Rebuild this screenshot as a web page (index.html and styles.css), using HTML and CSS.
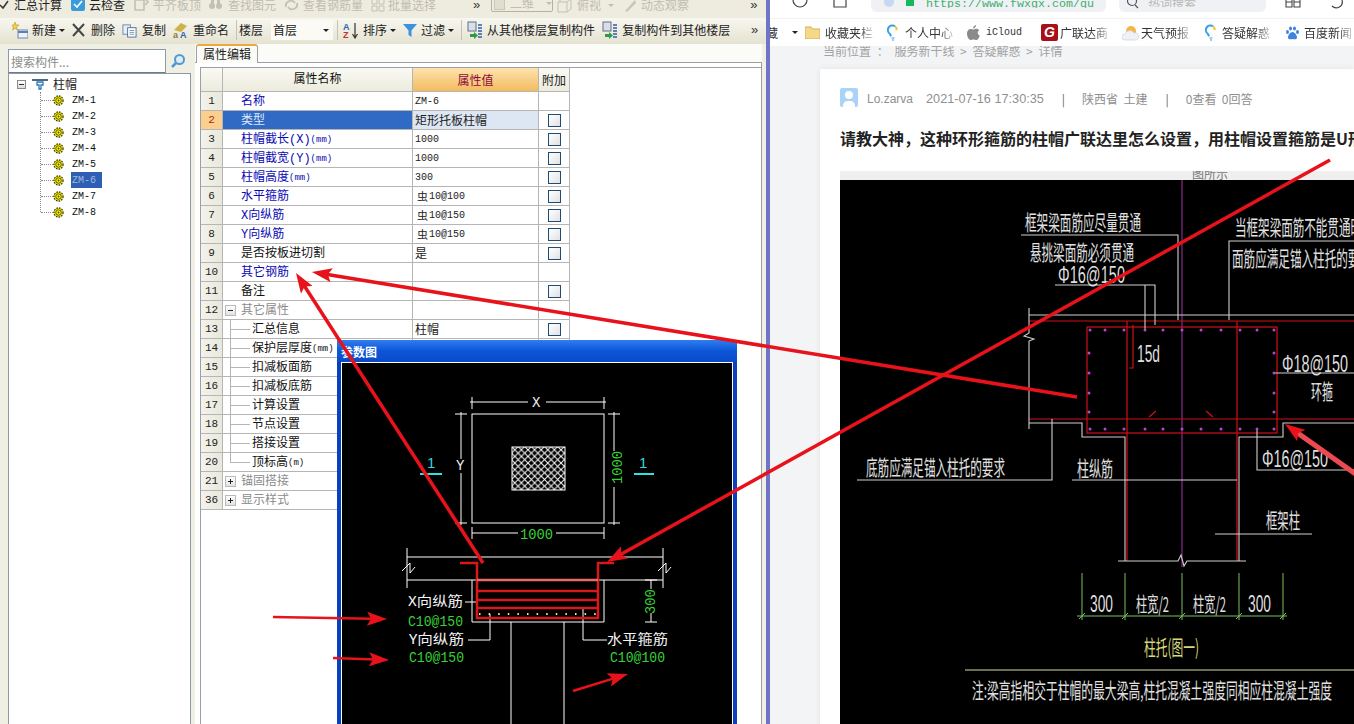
FILE: index.html
```html
<!DOCTYPE html>
<html lang="zh">
<head>
<meta charset="utf-8">
<title>属性编辑</title>
<link rel="stylesheet" href="styles.css">
</head>
<body>
<svg class="defs" width="0" height="0">
  <defs>
    <symbol id="gear" viewBox="0 0 11 11">
      <circle cx="5.5" cy="5.5" r="4.6" fill="#e8e000" stroke="#3a3a10" stroke-width="1.2" stroke-dasharray="1.6 1.1"/>
      <circle cx="5.5" cy="5.5" r="2.7" fill="#f4ee20" stroke="#55520c" stroke-width=".9"/>
      <circle cx="5.5" cy="5.5" r=".9" fill="#55520c"/>
    </symbol>
    <symbol id="copydoc" viewBox="0 0 16 16">
      <rect x="1" y="2" width="8" height="10" fill="#e9eef6" stroke="#6e86a8"/>
      <rect x="6" y="5" width="9" height="10" fill="#fff" stroke="#4f6f9c"/>
      <path d="M8 8h5M8 10h5M8 12h5" stroke="#7b95b8"/>
    </symbol>
    <symbol id="floorcopy" viewBox="0 0 16 18">
      <rect x="1" y="1" width="8" height="9" fill="#d9dee8" stroke="#5e6f88"/>
      <path d="M3 13h4v-2l4 3.5-4 3.5v-2H3z" fill="#2f9a45"/>
      <path d="M11 4h4M11 7h4M11 10h4M11 13h4M11 16h4" stroke="#2f5fa8" stroke-width="1.5"/>
    </symbol>
    <symbol id="bulb" viewBox="0 0 11 17">
      <path d="M8 2.2A4.4 4.4 0 0 0 3 10l1 2.4" fill="none" stroke="#36a3e8" stroke-width="2"/>
      <path d="M8 2.2a4.4 4.4 0 0 1 1.6 4" fill="none" stroke="#f2c230" stroke-width="2"/>
      <path d="M4.5 14h3M5 16h2" stroke="#36a3e8" stroke-width="1.2"/>
    </symbol>
    <marker id="head-big" viewBox="0 0 20 14" refX="6" refY="7" markerWidth="20" markerHeight="14" markerUnits="userSpaceOnUse" orient="auto">
      <path d="M0 0 20 7 0 14 4 7z" fill="#e8121a"/>
    </marker>
    <pattern id="hatch" width="6.6" height="6.6" patternUnits="userSpaceOnUse">
      <path d="M0 0 6.6 6.6M6.6 0 0 6.6" stroke="#fff" stroke-width="1"/>
    </pattern>
  </defs>
</svg>

<div class="screen">
  <section class="app">
    <div class="tb-top">
      <svg class="ic-clip" width="9" height="12" viewBox="0 0 9 12"><path d="M0 6l3 3 5-7" fill="none" stroke="#333" stroke-width="1.5"/></svg>
      <span class="tb-text t-first">汇总计算</span>
      <svg class="t-icon" width="16" height="14" viewBox="0 0 16 14"><rect x="1" y="0" width="14" height="13" rx="2" fill="#3a9bdc"/><path d="M4 6l3 3 5-6" fill="none" stroke="#fff" stroke-width="1.6"/></svg>
      <span class="tb-text t-cloud">云检查</span>
      <svg class="t-dis m9" width="15" height="14" viewBox="0 0 15 14"><path d="M1 2h9v10H1zM11 1l3 3-3 3" fill="none" stroke="#c3c1b3" stroke-width="1.6"/></svg>
      <span class="tb-text dis g4">平齐板顶</span>
      <svg class="t-dis m7" width="15" height="14" viewBox="0 0 15 14"><circle cx="4" cy="8" r="3" fill="#c3c1b3"/><circle cx="11" cy="8" r="3" fill="#c3c1b3"/><path d="M3 1h3v5H3zM9 1h3v5H9z" fill="#c3c1b3"/></svg>
      <span class="tb-text dis g5">查找图元</span>
      <svg class="t-dis m8" width="15" height="14" viewBox="0 0 15 14"><path d="M2 9a5 5 0 0 1 9-4M13 5a5 5 0 0 1-9 4" fill="none" stroke="#c3c1b3" stroke-width="1.8"/></svg>
      <span class="tb-text dis g4">查看钢筋量</span>
      <svg class="t-dis m8" width="14" height="14" viewBox="0 0 14 14"><path d="M1 1h5v5H1zM8 1h5v5H8zM1 8h5v5H1zM8 8h5v5H8z" fill="none" stroke="#c3c1b3"/></svg>
      <span class="tb-text dis g3">批量选择</span>
      <span class="more m37">»</span>
      <span class="combo"><span class="combo-box"></span><span class="combo-t">二维</span><span class="caret caret-dis"></span></span>
      <svg class="t-dis m4" width="15" height="15" viewBox="0 0 15 15"><path d="M1 4h9v10H1zM1 4l4-3h9l-4 3M10 14l4-3V1" fill="none" stroke="#c3c1b3"/></svg>
      <span class="tb-text dis g5">俯视</span>
      <span class="caret caret-dis m7"></span>
      <svg class="t-dis m8" width="15" height="15" viewBox="0 0 15 15"><path d="M3 13 13 2l1 3-9 9z" fill="#c8c6b8"/></svg>
      <span class="tb-text dis g4">动态观察</span>
      <span class="more more-end">»</span>
    </div>

    <div class="tb-main">
      <button class="tb-item first">
        <svg width="16" height="17" viewBox="0 0 16 17"><path d="M3 0l1 3h3L4.500 5l1 3L3 6.200.5 8l1-3L-1 3h3z" fill="#f4cf3e" stroke="#a88a16" stroke-width=".5"/><rect x="6" y="8" width="10" height="8" fill="#eef3fa" stroke="#6a86b0"/><path d="M6 10h10" stroke="#5d7fb3" stroke-width="2"/></svg>
        <span>新建</span><i class="caret"></i>
      </button>
      <button class="tb-item tight6">
        <svg width="13" height="14" viewBox="0 0 13 14"><path d="M1 1l11 12M12 1 1 13" stroke="#454545" stroke-width="2"/></svg>
        <span>删除</span>
      </button>
      <button class="tb-item">
        <svg width="15" height="15"><use href="#copydoc"/></svg>
        <span>复制</span>
      </button>
      <button class="tb-item">
        <svg width="15" height="17" viewBox="0 0 15 17"><path d="M1 8 8 1l6 3-6 6z" fill="#cdb24a"/><text class="ic-text" x="0" y="16">a</text><text class="ic-text blue" x="7" y="16">A</text></svg>
        <span>重命名</span>
      </button>
      <span class="sep"></span>
      <span class="tb-label">楼层</span>
      <span class="floor-select"><span>首层</span><i class="caret"></i></span>
      <span class="sep sep-a"></span>
      <button class="tb-item m5">
        <svg width="15" height="17" viewBox="0 0 15 17"><text class="ic-text blue" x="0" y="8">A</text><text class="ic-text red" x="0" y="16">Z</text><path d="M12 1v14M9.500 12l2.500 4 2.500-4" fill="none" stroke="#333" stroke-width="1.200"/></svg>
        <span>排序</span><i class="caret"></i>
      </button>
      <button class="tb-item g4">
        <svg width="14" height="15" viewBox="0 0 14 15"><path d="M0 1h14L8.500 7.500V14l-3-2V7.500z" fill="#3c92dc"/></svg>
        <span>过滤</span><i class="caret"></i>
      </button>
      <span class="sep"></span>
      <button class="tb-item m5 g4">
        <svg width="16" height="18"><use href="#floorcopy"/></svg>
        <span>从其他楼层复制构件</span>
      </button>
      <button class="tb-item m7 g4">
        <svg width="16" height="18"><use href="#floorcopy"/></svg>
        <span>复制构件到其他楼层</span>
      </button>
      <span class="more more-main">»</span>
    </div>

    <div class="work">
      <aside class="side">
        <div class="search">
          <input class="search-input" value="搜索构件..." readonly>
          <svg class="search-ic" width="16" height="16" viewBox="0 0 16 16"><circle cx="9.500" cy="6.500" r="4.500" fill="#dcecf8" stroke="#4f9bd4" stroke-width="2"/><path d="M6 10l-4 4" stroke="#4f9bd4" stroke-width="2.500"/></svg>
        </div>
        <div class="tree">
          <div class="tree-root">
            <span class="exp"><i></i></span>
            <svg width="16" height="12" viewBox="0 0 16 12"><path d="M0 1h16v2H0z" fill="#4b6a84"/><path d="M5 4h6v3H9v4H7V7H5z" fill="none" stroke="#2a78b8" stroke-width="1.300"/></svg>
            <span class="root-label">柱帽</span>
          </div>
          <ul class="tree-list">
            <li><svg width="11" height="11"><use href="#gear"/></svg><span>ZM-1</span></li>
            <li><svg width="11" height="11"><use href="#gear"/></svg><span>ZM-2</span></li>
            <li><svg width="11" height="11"><use href="#gear"/></svg><span>ZM-3</span></li>
            <li><svg width="11" height="11"><use href="#gear"/></svg><span>ZM-4</span></li>
            <li><svg width="11" height="11"><use href="#gear"/></svg><span>ZM-5</span></li>
            <li><svg width="11" height="11"><use href="#gear"/></svg><span class="sel">ZM-6</span></li>
            <li><svg width="11" height="11"><use href="#gear"/></svg><span>ZM-7</span></li>
            <li><svg width="11" height="11"><use href="#gear"/></svg><span>ZM-8</span></li>
          </ul>
        </div>
      </aside>

      <main class="panel">
        <div class="tabs"><span class="tab">属性编辑</span></div>
        <div class="sheet">
          <div class="grid">
            <div class="row head"><b class="no"></b><b class="nm">属性名称</b><b class="val">属性值</b><b class="add">附加</b></div>
            <div class="row"><b class="no">1</b><span class="nm link">名称</span><span class="val mono">ZM-6</span><span class="add"></span></div>
            <div class="row on"><b class="no">2</b><span class="nm link">类型</span><span class="val">矩形托板柱帽</span><span class="add"><i class="chk"></i></span></div>
            <div class="row"><b class="no">3</b><span class="nm link">柱帽截长(X)<small>(mm)</small></span><span class="val mono">1000</span><span class="add"><i class="chk"></i></span></div>
            <div class="row"><b class="no">4</b><span class="nm link">柱帽截宽(Y)<small>(mm)</small></span><span class="val mono">1000</span><span class="add"><i class="chk"></i></span></div>
            <div class="row"><b class="no">5</b><span class="nm link">柱帽高度<small>(mm)</small></span><span class="val mono">300</span><span class="add"><i class="chk"></i></span></div>
            <div class="row"><b class="no">6</b><span class="nm link">水平箍筋</span><span class="val mono steel"><em>虫</em>10@100</span><span class="add"><i class="chk"></i></span></div>
            <div class="row"><b class="no">7</b><span class="nm link">X向纵筋</span><span class="val mono steel"><em>虫</em>10@150</span><span class="add"><i class="chk"></i></span></div>
            <div class="row"><b class="no">8</b><span class="nm link">Y向纵筋</span><span class="val mono steel"><em>虫</em>10@150</span><span class="add"><i class="chk"></i></span></div>
            <div class="row"><b class="no">9</b><span class="nm">是否按板进切割</span><span class="val">是</span><span class="add"><i class="chk"></i></span></div>
            <div class="row"><b class="no">10</b><span class="nm link">其它钢筋</span><span class="val"></span><span class="add"></span></div>
            <div class="row"><b class="no">11</b><span class="nm">备注</span><span class="val"></span><span class="add"><i class="chk"></i></span></div>
            <div class="row"><b class="no">12</b><span class="nm grp"><i class="box minus"></i>其它属性</span><span class="val"></span><span class="add"></span></div>
            <div class="row"><b class="no">13</b><span class="nm sub">汇总信息</span><span class="val">柱帽</span><span class="add"><i class="chk"></i></span></div>
            <div class="row"><b class="no">14</b><span class="nm sub">保护层厚度<small>(mm)</small></span><span class="val"></span><span class="add"></span></div>
            <div class="row"><b class="no">15</b><span class="nm sub">扣减板面筋</span><span class="val"></span><span class="add"></span></div>
            <div class="row"><b class="no">16</b><span class="nm sub">扣减板底筋</span><span class="val"></span><span class="add"></span></div>
            <div class="row"><b class="no">17</b><span class="nm sub">计算设置</span><span class="val"></span><span class="add"></span></div>
            <div class="row"><b class="no">18</b><span class="nm sub">节点设置</span><span class="val"></span><span class="add"></span></div>
            <div class="row"><b class="no">19</b><span class="nm sub">搭接设置</span><span class="val"></span><span class="add"></span></div>
            <div class="row"><b class="no">20</b><span class="nm sub last">顶标高<small>(m)</small></span><span class="val"></span><span class="add"></span></div>
            <div class="row"><b class="no">21</b><span class="nm grp"><i class="box plus"></i>锚固搭接</span><span class="val"></span><span class="add"></span></div>
            <div class="row"><b class="no">36</b><span class="nm grp"><i class="box plus"></i>显示样式</span><span class="val"></span><span class="add"></span></div>
          </div>
        </div>
      </main>
    </div>

    <div class="dialog">
      <div class="dialog-title">参数图</div>
      <div class="dialog-body">
        <svg class="cad" width="391" height="362" viewBox="342 362 391 362">
          <g class="w">
            <rect x="472" y="413" width="132" height="109"/>
            <path d="M470 401H528M546 401H606M472 396V408M604 396V408"/>
            <path d="M461 411V458M461 472V524M455 413H467M455 522H467"/>
            <path d="M614 411V450M614 486V524M608 413H620M608 522H620"/>
            <path d="M472 532H518M556 532H604M472 526V538M604 526V538"/>
            <path d="M407 556H663M407 579H663M407 547V587M663 547V587"/>
            <path d="M402 570 410 562V572L415 566M658 570 666 562V572L671 566"/>
            <path d="M472 579V621H604V579M511 621V724M564 621V724"/>
            <path d="M465 601H477M468 639H490V613M583 607V639H607"/>
            <path d="M651 579V588M651 612V621M645 579H657M645 621H657"/>
          </g>
          <rect x="512" y="446" width="53" height="43" fill="url(#hatch)" stroke="#fff"/>
          <g class="cy"><path d="M420 473H442M634 473H654"/></g>
          <text class="t-cy" x="427" y="467">1</text>
          <text class="t-cy" x="639" y="467">1</text>
          <text class="t-wm" x="532" y="406">X</text>
          <text class="t-wm" x="456" y="469">Y</text>
          <text class="t-gr" x="520" y="538">1000</text>
          <text class="t-gr" transform="translate(622 483) rotate(-90)">1000</text>
          <text class="t-gr" transform="translate(655 613) rotate(-90)">300</text>
          <g class="rd">
            <path d="M460 562H477V617H598V562H614"/>
            <path d="M477 590H598M477 599H598M477 607H598"/>
            <path class="rd-soft" d="M477 579H598"/>
          </g>
          <path class="yd" d="M479 613H596"/>
          <text class="t-cn" x="408" y="605" textLength="55" lengthAdjust="spacingAndGlyphs">X向纵筋</text>
          <text class="t-gr" x="408" y="625" textLength="55" lengthAdjust="spacingAndGlyphs">C10@150</text>
          <text class="t-cn" x="409" y="643" textLength="55" lengthAdjust="spacingAndGlyphs">Y向纵筋</text>
          <text class="t-gr" x="409" y="661" textLength="55" lengthAdjust="spacingAndGlyphs">C10@150</text>
          <text class="t-cn" x="607" y="643" textLength="61" lengthAdjust="spacingAndGlyphs">水平箍筋</text>
          <text class="t-gr" x="610" y="661" textLength="55" lengthAdjust="spacingAndGlyphs">C10@100</text>
        </svg>
      </div>
    </div>
  </section>

  <div class="divider"></div>

  <section class="browser">
    <div class="chrome">
      <svg class="c-nav" width="16" height="11" viewBox="0 0 16 11"><circle cx="8" cy="0" r="7" fill="none" stroke="#444" stroke-width="1.200"/></svg>
      <svg class="c-home" width="14" height="11" viewBox="0 0 14 11"><path d="M1 0V7H13V0" fill="none" stroke="#444" stroke-width="1.200"/></svg>
      <div class="url">
        <svg width="10" height="11" viewBox="0 0 10 11"><circle cx="5" cy="2" r="5" fill="#c6d8f2"/></svg>
        <i class="lock"></i>
        <span class="url-text">https://www.fwxgx.com/qu</span>
      </div>
      <div class="find">
        <svg width="13" height="11" viewBox="0 0 13 11"><circle cx="5" cy="1" r="4.500" fill="none" stroke="#555" stroke-width="1.200"/><path d="M8 5l3 3" stroke="#555" stroke-width="1.200"/></svg>
        <span>热词搜索</span>
      </div>
      <svg class="c-grid" width="16" height="8" viewBox="0 0 16 8"><path d="M1 0V7H7V0M9 0V7H15V0M1 2H7M9 2H15" fill="none" stroke="#444" stroke-width="1.100"/></svg>
      <svg class="c-undo" width="16" height="9" viewBox="0 0 16 9"><path d="M13 0A6 6 0 0 1 3 6" fill="none" stroke="#444" stroke-width="1.200"/></svg>
    </div>
    <div class="bookmarks">
      <span class="bm bm-0">藏</span><i class="caret bm-caret"></i>
      <span class="bm m7">
        <svg width="15" height="13" viewBox="0 0 15 13"><path d="M0 1h6l1.500 2H15v10H0z" fill="#f6d889" stroke="#d8b04e"/></svg>
        <span class="fade">收藏夹栏</span>
      </span>
      <span class="bm m14 g7"><svg width="11" height="17"><use href="#bulb"/></svg><span class="fade">个人中心</span></span>
      <span class="bm m14 g6">
        <svg width="13" height="15" viewBox="0 0 13 15"><path d="M9 0c0 2-1.500 3.500-3 3.500C6 2 7 .5 9 0zM6.500 4.500c1 0 1.800-.7 3-.7 1 0 2 .5 2.700 1.500-2.200 1.400-1.800 4.400.6 5.400C12 12.800 10.800 15 9.300 15c-1 0-1.500-.6-2.800-.6s-1.800.6-2.800.6C1.800 15 0 11.500 0 8.500 0 5.500 1.800 3.900 3.600 3.900c1.200 0 2 .6 2.900.6z" fill="#8a8a8a"/></svg>
        <span class="mono-bm">iCloud</span>
      </span>
      <span class="bm m19 g2"><span class="g-logo">G</span><span class="fade">广联达商</span></span>
      <span class="bm m14 g2">
        <svg width="17" height="16" viewBox="0 0 17 16"><circle cx="9" cy="6" r="5" fill="#f7b548"/><path d="M3 15a3 3 0 0 1 0-6 5 5 0 0 1 9-1 3.500 3.500 0 0 1 2 7z" fill="#eef2f6" stroke="#c9d2dc" stroke-width=".7"/></svg>
        <span class="fade">天气预报</span>
      </span>
      <span class="bm m16 g6"><svg width="11" height="17"><use href="#bulb"/></svg><span class="fade">答疑解惑</span></span>
      <span class="bm m16">
        <svg width="13" height="14" viewBox="0 0 13 14"><g fill="#3e83df"><ellipse cx="4.500" cy="2.500" rx="1.500" ry="2"/><ellipse cx="8.500" cy="2.500" rx="1.500" ry="2"/><ellipse cx="1.500" cy="6" rx="1.500" ry="2"/><ellipse cx="11.500" cy="6" rx="1.500" ry="2"/><path d="M6.500 6c2 0 4.500 3 4.500 5.500 0 2-2.500 2-4.500 1.500-2 .5-4.500.5-4.500-1.500C2 9 4.500 6 6.500 6z"/></g></svg>
        <span class="fade">百度新闻</span>
      </span>
    </div>
    <div class="page">
      <div class="crumb">当前位置 ： 服务新干线 &gt; 答疑解惑 &gt; 详情</div>
      <article class="card">
        <div class="meta">
          <svg class="avatar" width="18" height="19" viewBox="0 0 18 19"><rect width="18" height="19" rx="2" fill="#a9d4f8"/><circle cx="9" cy="7" r="4" fill="#fff"/><path d="M3 19c0-5 2-6 6-6s6 1 6 6z" fill="#fff"/></svg>
          <span class="m-name">Lo.zarva</span>
          <span class="m-date">2021-07-16 17:30:35</span>
          <span class="m-bar">|</span>
          <span class="m-loc">陕西省&nbsp;&nbsp;土建</span>
          <span class="m-bar m-bar2">|</span>
          <span class="m-stat">0查看&nbsp;&nbsp;0回答</span>
        </div>
        <h1 class="title">请教大神，这种环形箍筋的柱帽广联达里怎么设置，用柱帽设置箍筋是U形</h1>
        <figure class="figure">
          <svg class="cad" width="514" height="553" viewBox="840 171 514 553">
            <rect x="840" y="171" width="514" height="9" fill="#efefef"/>
            <rect x="840" y="180" width="514" height="544" fill="#000"/>
            <text class="t-clip" x="1192" y="179">图所示</text>
            <path class="mg" d="M1182 180V567"/>
            <g class="rl">
              <path d="M1029 321H1354M1029 419H1354"/>
              <rect x="1087" y="327" width="190" height="106"/>
              <path d="M1127 321V561M1237 321V561M1133 325V368L1129 368"/>
              <path d="M1149 417 1156 411M1206 411 1213 417"/>
            </g>
            <g class="wl">
              <path d="M1021 235H1178V320"/>
              <path d="M1229 320V241H1354"/>
              <path d="M1055 285H1155V325M1145 285V330"/>
              <path d="M1029 315H1354M1029 308V333L1024 336 1034 339 1029 341V429"/>
              <path d="M1029 423H1082V437H1125V561M1354 423H1283V437H1239V561"/>
              <path d="M1118 561H1178L1181 555 1184 566 1187 561H1246"/>
              <path d="M857 480H1052V419M1072 480H1237M1215 534H1312M1257 428V470H1354M1275 373H1354"/>
            </g>
            <g class="mgd">
              <circle cx="1090" cy="330" r="1.500"/><circle cx="1105" cy="330" r="1.500"/><circle cx="1124" cy="330" r="1.500"/><circle cx="1145" cy="330" r="1.500"/><circle cx="1163" cy="330" r="1.500"/><circle cx="1182" cy="330" r="1.500"/><circle cx="1201" cy="330" r="1.500"/><circle cx="1221" cy="330" r="1.500"/><circle cx="1240" cy="330" r="1.500"/><circle cx="1257" cy="330" r="1.500"/><circle cx="1274" cy="330" r="1.500"/>
              <circle cx="1090" cy="429" r="1.500"/><circle cx="1105" cy="429" r="1.500"/><circle cx="1124" cy="429" r="1.500"/><circle cx="1145" cy="429" r="1.500"/><circle cx="1163" cy="429" r="1.500"/><circle cx="1182" cy="429" r="1.500"/><circle cx="1201" cy="429" r="1.500"/><circle cx="1221" cy="429" r="1.500"/><circle cx="1240" cy="429" r="1.500"/><circle cx="1257" cy="429" r="1.500"/><circle cx="1274" cy="429" r="1.500"/>
              <circle cx="1089" cy="353" r="1.500"/><circle cx="1089" cy="373" r="1.500"/><circle cx="1089" cy="393" r="1.500"/><circle cx="1089" cy="412" r="1.500"/>
              <circle cx="1274" cy="353" r="1.500"/><circle cx="1274" cy="373" r="1.500"/><circle cx="1274" cy="393" r="1.500"/><circle cx="1274" cy="412" r="1.500"/>
            </g>
            <g class="gl">
              <path d="M1082 573V620M1125 573V620M1182 573V620M1239 573V620M1283 573V620M1077 616H1287"/>
              <path d="M1079 619 1085 613M1122 619 1128 613M1179 619 1185 613M1236 619 1242 613M1280 619 1286 613"/>
            </g>
            <path class="yl" d="M965 670H1354"/>
            <text class="t-b" x="1025" y="230" textLength="116" lengthAdjust="spacingAndGlyphs">框架梁面筋应尽量贯通</text>
            <text class="t-b" x="1030" y="260" textLength="104" lengthAdjust="spacingAndGlyphs">悬挑梁面筋必须贯通</text>
            <text class="t-l" x="1058" y="283" textLength="67" lengthAdjust="spacingAndGlyphs">Φ16@150</text>
            <text class="t-b" x="1235" y="235" textLength="127" lengthAdjust="spacingAndGlyphs">当框架梁面筋不能贯通时</text>
            <text class="t-b" x="1232" y="266" textLength="139" lengthAdjust="spacingAndGlyphs">面筋应满足锚入柱托的要求</text>
            <text class="t-l" x="1137" y="362" textLength="23" lengthAdjust="spacingAndGlyphs">15d</text>
            <text class="t-l" x="1282" y="372" textLength="66" lengthAdjust="spacingAndGlyphs">Φ18@150</text>
            <text class="t-b" x="1311" y="399" textLength="22" lengthAdjust="spacingAndGlyphs">环箍</text>
            <text class="t-l" x="1262" y="467" textLength="66" lengthAdjust="spacingAndGlyphs">Φ16@150</text>
            <text class="t-b" x="866" y="475" textLength="139" lengthAdjust="spacingAndGlyphs">底筋应满足锚入柱托的要求</text>
            <text class="t-b" x="1077" y="476" textLength="36" lengthAdjust="spacingAndGlyphs">柱纵筋</text>
            <text class="t-b" x="1266" y="528" textLength="34" lengthAdjust="spacingAndGlyphs">框架柱</text>
            <text class="t-l" x="1090" y="612" textLength="23" lengthAdjust="spacingAndGlyphs">300</text>
            <text class="t-s" x="1136" y="612" textLength="33" lengthAdjust="spacingAndGlyphs">柱宽/2</text>
            <text class="t-s" x="1193" y="612" textLength="33" lengthAdjust="spacingAndGlyphs">柱宽/2</text>
            <text class="t-l" x="1248" y="612" textLength="23" lengthAdjust="spacingAndGlyphs">300</text>
            <text class="t-y" x="1144" y="655" textLength="55" lengthAdjust="spacingAndGlyphs">柱托(图一)</text>
            <text class="t-b" x="972" y="698" textLength="360" lengthAdjust="spacingAndGlyphs">注:梁高指相交于柱帽的最大梁高,柱托混凝土强度同相应柱混凝土强度</text>
          </svg>
        </figure>
      </article>
    </div>
  </section>

  <svg class="arrows" width="1354" height="724" viewBox="0 0 1354 724">
    <g class="ar">
      <path d="M1330 160 619.200 555.200" marker-end="url(#head-big)"/>
      <path d="M1077 397 325.800 274.300" marker-end="url(#head-big)"/>
      <path d="M483 563 303.600 284.800" marker-end="url(#head-big)"/>
    </g>
    <g class="ar ar-small">
      <path d="M273 617 373 618.800" marker-end="url(#head-big)"/>
      <path d="M333 658 375 659.500" marker-end="url(#head-big)"/>
      <path d="M573 691 614.600 678.100" marker-end="url(#head-big)"/>
    </g>
    <path class="ar ar-fade" d="M1364 480 1296.400 432.100" marker-end="url(#head-big)"/>
  </svg>
</div>
</body>
</html>
```
FILE: styles.css
```css
* { box-sizing: border-box; }
html, body { margin: 0; height: 724px; overflow: hidden; background: #fff; }
body { font: 12px/14px "Noto Sans CJK SC", "Liberation Sans", sans-serif; color: #222; }
.defs { position: absolute; }
.screen { position: relative; display: flex; width: 1354px; height: 724px; overflow: hidden; }
button { all: unset; box-sizing: border-box; }
ul { list-style: none; margin: 0; padding: 0; }
small { font: 9px "Liberation Mono", monospace; }
em { font-style: normal; }

/* application window */
.app { position: relative; width: 766px; height: 724px; background: #f0efe4; display: flex; flex-direction: column; flex: none; }
.tb-top { height: 18px; padding-bottom: 8px; display: flex; align-items: center; background: #eeecdf; white-space: nowrap; overflow: hidden; flex: none; }
.ic-clip { margin-right: 5px; }
.t-first { margin-right: 8px; }
.t-icon { margin-right: 3px; }
.t-dis { flex: none; }
.m4 { margin-left: 4px; }
.m5 { margin-left: 5px; }
.m7 { margin-left: 7px; }
.m8 { margin-left: 8px; }
.m9 { margin-left: 9px; }
.m14 { margin-left: 14px; }
.m16 { margin-left: 16px; }
.m19 { margin-left: 19px; }
.m37 { margin-left: 37px; }
.dis { color: #bfbdaf; }
.tb-text.g3 { margin-left: 3px; }
.tb-text.g4 { margin-left: 4px; }
.tb-text.g5 { margin-left: 5px; }
.more { font: 13px/12px "Liberation Sans", sans-serif; color: #333; width: 12px; }
.more-end { margin-left: 61px; }
.combo { position: relative; margin-left: 6px; display: flex; align-items: center; width: 62px; height: 18px; margin-top: -4px; border: 1px solid #b4b2a2; border-radius: 2px; background: #eeecdf; }
.combo-box { width: 16px; height: 14px; margin-left: 2px; background: #dfdecf; border: 1px solid #c9c7b8; }
.combo-t { color: #bfbdaf; margin-left: 5px; }
.caret { display: inline-block; flex: none; width: 0; height: 0; border: 3px solid transparent; border-top: 3px solid #222; border-bottom: 0; }
.caret-dis { border-top-color: #bfbdaf; }
.combo .caret { margin-left: 12px; }

.tb-main { height: 26px; display: flex; align-items: center; padding: 0 0 2px 12px; background: linear-gradient(#f8f7f0, #e4e2d0); flex: none; white-space: nowrap; }
.tb-item { display: flex; align-items: center; gap: 5px; margin-left: 7px; flex: none; }
.tb-item svg { flex: none; }
.tb-item .caret { margin-left: -2px; }
.tb-item.first { margin-left: 0; gap: 4px; }
.tb-item.first .caret { margin-left: -1px; margin-right: 1px; }
.tight6 { margin-left: 6px; gap: 6px; }
.tb-item.g4 { gap: 4px; }
.tb-item.g4 .caret { margin-left: -1px; }
.tb-item.m5 { margin-left: 5px; }
.sep { width: 1px; height: 20px; background: #c4c2b2; margin-left: 7px; flex: none; }
.sep-a { margin-left: 4px; }
.tb-label { margin-left: 2px; }
.floor-select { display: flex; align-items: center; justify-content: space-between; width: 62px; height: 20px; margin-left: 8px; padding: 0 4px 0 2px; background: #fbfaf5; }
.more-main { margin-left: auto; margin-right: 3px; }
.ic-text { font: bold 9px "Liberation Sans", sans-serif; fill: #8a7a40; }
.ic-text.blue { fill: #2f62b0; }
.ic-text.red { fill: #c23030; }

.work { flex: 1; display: flex; min-height: 0; padding-left: 8px; }
.side { width: 183px; flex: none; display: flex; flex-direction: column; padding-top: 5px; }
.search { height: 24px; display: flex; align-items: center; flex: none; }
.search-input { width: 158px; height: 24px; border: 1px solid #8d9aa6; border-bottom-color: #6d7c8a; background: #fff; padding: 0 2px; font: 12px "Noto Sans CJK SC", sans-serif; color: #8a8a8a; outline: 0; }
.search-ic { margin-left: 4px; }
.tree { flex: 1; background: #fff; border: 1px solid #8d9aa6; border-bottom: 0; padding: 2px 0 0 8px; }
.tree-root { display: flex; align-items: center; height: 16px; }
.exp { width: 9px; height: 9px; border: 1px solid #8a8a8a; display: flex; align-items: center; justify-content: center; background: linear-gradient(#fff, #dcdcdc); }
.exp i { width: 5px; height: 1px; background: #333; }
.tree-root svg { margin-left: 6px; }
.root-label { margin-left: 5px; }
.tree-list { margin-left: 23px; border-left: 1px dotted #8a8a8a; height: 120px; }
.tree-list li { position: relative; display: flex; align-items: center; height: 16px; padding-left: 12px; }
.tree-list li::before { content: ""; position: absolute; left: 0; top: 8px; width: 12px; border-top: 1px dotted #8a8a8a; }
.tree-list li span { font: 10px/15px "Liberation Mono", monospace; margin-left: 7px; padding: 1px 1px 0; color: #111; }
.tree-list li .sel { background: #2f5fb5; color: #9fb7de; width: 31px; }

.panel { margin-left: 4px; width: 567px; flex: none; display: flex; flex-direction: column; }
.tabs { height: 19px; flex: none; background: #fbfbf8; border-bottom: 1px solid #9aa0a6; display: flex; padding-left: 1px; }
.tab { width: 62px; height: 19px; border: 1px solid #9aa0a6; border-bottom: 0; border-top: 2px solid #f0a83c; border-radius: 3px 3px 0 0; background: #fbfbf8; text-align: center; line-height: 15px; }
.sheet { flex: 1; background: #fff; padding: 4px 0 0 5px; border-right: 1px solid #9aa0a6; }
.grid { width: 562px; height: 100%; border: 1px solid #9aa0a6; border-bottom: 0; }
.row { display: grid; grid-template-columns: 22px 190px 126px 31px; height: 19px; width: 369px; }
.row > * { font-weight: 400; display: flex; align-items: center; border-right: 1px solid #b5b5b5; border-bottom: 1px solid #b5b5b5; min-width: 0; white-space: nowrap; }
.no { justify-content: center; font: 11px "Liberation Mono", monospace; background: linear-gradient(90deg, #f4f3ec, #e9e8dc); color: #222; }
.row .nm { padding-top: 2px; padding-left: 18px; color: #111; font-family: "Liberation Mono", "Noto Sans CJK SC", monospace; }
.val { padding-left: 2px; }
.mono { font: 10px "Liberation Mono", monospace; }
.steel { padding-left: 4px; }
.steel em { font: 11px "Noto Sans CJK SC", sans-serif; margin-right: 1px; }
.add { justify-content: center; }
.row .link { color: #0a0ab4; }
.row.head { height: 24px; }
.head .no, .row.head .nm { background: linear-gradient(#fafaf4, #ecebdd); justify-content: center; padding: 0; }
.head .val { background: linear-gradient(#fde3ad, #f4bb60); color: #8c0a3c; justify-content: center; padding: 0; }
.head .add { background: linear-gradient(#fafaf4, #ecebdd); font-size: 12px; }
.on .no { background: #fbd08e; color: #b0201c; }
.row.on .nm { background: #316ac5; color: #dfe8f8; }
.on .val { background: #dde7f4; }
.chk { width: 13px; height: 13px; border: 1px solid #234a70; background: linear-gradient(135deg, #fff, #dfe2e6); }
.row .grp { color: #8c8c8c; padding-left: 2px; }
.box { position: relative; width: 11px; height: 11px; margin-top: -2px; margin-right: 5px; border: 1px solid #b9b9b9; background: linear-gradient(#fff, #e2e2e2); flex: none; }
.box::before { content: ""; position: absolute; left: 2px; top: 4px; width: 5px; height: 1px; background: #222; }
.plus::after { content: ""; position: absolute; left: 4px; top: 2px; width: 1px; height: 5px; background: #222; }
.row .sub { position: relative; padding-left: 29px; }
.sub::before { content: ""; position: absolute; left: 7px; top: -1px; bottom: -1px; border-left: 1px solid #b5b5b5; }
.sub::after { content: ""; position: absolute; left: 7px; top: 9px; width: 20px; border-top: 1px solid #b5b5b5; }
.sub.last::before { bottom: 8px; }

/* parameter diagram window */
.dialog { position: absolute; left: 337px; top: 340px; width: 400px; height: 384px; background: #0a3fc0; padding: 0 4px; display: flex; flex-direction: column; }
.dialog-title { height: 22px; flex: none; margin: 0 -4px; padding: 4px 0 0 4px; background: linear-gradient(#2f7df0, #0c56d8 50%, #0a49c8); color: #fff; font-weight: 700; line-height: 16px; }
.dialog-body { flex: 1; background: #000; border: 1px solid #fff; border-bottom: 0; overflow: hidden; min-height: 0; }
.cad { display: block; }
.w, .wl, .cy, .rd, .rl, .gl { fill: none; }
.w { stroke: #fff; stroke-width: 1; }
.cy { stroke: #2ee0e0; stroke-width: 2; }
.rd { stroke: #d8181c; stroke-width: 2.500; }
.rd-soft { stroke: #e86a6a; }
.yd { stroke: #ffe878; stroke-width: 2; stroke-dasharray: 1.500 8.100; fill: none; }
.t-cy { font: 15px "Liberation Sans", sans-serif; fill: #35d8d8; }
.t-wm { font: 14px "Liberation Mono", monospace; fill: #f0f0f0; }
.t-gr { font: 13.750px "Liberation Mono", monospace; fill: #38d038; }
.t-cn { font: 13.500px "Noto Sans CJK SC", sans-serif; fill: #f4f4f4; }

/* divider + browser */
.divider { width: 4px; flex: none; background: #6f74c8; }
.browser { flex: 1; display: flex; flex-direction: column; min-width: 0; background: #f3f4f6; }
.chrome { height: 18px; flex: none; background: #fff; display: flex; align-items: flex-start; overflow: hidden; }
.c-nav { margin-left: 22px; flex: none; }
.c-home { margin-left: 25px; flex: none; }
.url { margin-left: 24px; width: 235px; height: 12px; background: #eff1f4; border-radius: 0 0 6px 6px; display: flex; align-items: flex-start; padding-left: 13px; flex: none; }
.lock { width: 8px; height: 6px; background: #16b85a; margin-left: 12px; }
.url-text { font: 11.670px/8px "Liberation Mono", monospace; color: #3fae6f; margin-left: 12px; white-space: nowrap; overflow: hidden; width: 170px; height: 8px; }
.find { margin-left: 13px; width: 147px; height: 12px; background: #eff1f4; border-radius: 0 0 6px 6px; display: flex; padding-left: 8px; flex: none; overflow: hidden; }
.find span { font-size: 12px; line-height: 6px; color: #b8b8b8; margin-left: 8px; height: 7px; overflow: hidden; }
.c-grid { margin-left: 19px; flex: none; }
.c-undo { margin-left: 28px; flex: none; }

.bookmarks { height: 28px; flex: none; background: #fff; border-top: 1px solid #f2f2f2; display: flex; align-items: center; white-space: nowrap; overflow: hidden; color: #333; position: relative; z-index: 1; }
.bm { display: flex; align-items: center; gap: 5px; flex: none; }
.bm.g7 { gap: 7px; }
.bm.g6 { gap: 6px; }
.bm.g2 { gap: 2px; }
.bm-0 { margin-left: -4px; }
.bm-caret { margin-left: 14px; }
.fade { -webkit-mask-image: linear-gradient(90deg, #000 70%, rgba(0,0,0,.25)); mask-image: linear-gradient(90deg, #000 70%, rgba(0,0,0,.25)); }
.mono-bm { font: 10px "Liberation Mono", monospace; }
.g-logo { width: 17px; height: 17px; background: #a80f16; color: #fff; border-radius: 2px; font: italic 700 14px/17px "Liberation Sans", sans-serif; text-align: center; }

.page { flex: 1; min-height: 0; padding-left: 50px; overflow: hidden; }
.crumb { margin: -1px 0 0 3px; height: 24px; font-size: 12px; line-height: 12px; color: #a2a2a2; white-space: nowrap; word-spacing: 3px; }
.card { background: #fff; padding: 19px 0 0 20px; height: 660px; box-shadow: 0 0 6px rgba(0,0,0,.08); overflow: hidden; }
.meta { display: flex; align-items: center; height: 19px; color: #8f8f8f; white-space: nowrap; }
.meta .avatar { flex: none; }
.meta span { position: relative; top: 1px; }
.m-name { margin-left: 9px; font-family: "Liberation Sans", sans-serif; }
.m-date { margin-left: 13px; font: 12.700px "Liberation Sans", sans-serif; }
.m-bar { margin-left: 18px; color: #666; }
.m-loc { margin-left: 17px; }
.m-bar2 { margin-left: 18px; }
.m-stat { margin-left: 17px; }
.title { margin: 19px 0 0; font-size: 16px; line-height: 24px; font-weight: 700; color: #222; white-space: nowrap; overflow: hidden; }
.figure { margin: 21px 0 0; }
.t-clip { font: 12px "Noto Sans CJK SC", sans-serif; fill: #777; }
.mg { stroke: #8a2a8a; stroke-width: 1.200; fill: none; }
.rl { stroke: #d01018; stroke-width: 1.200; }
.wl { stroke: #cfcfcf; stroke-width: 1.100; }
.mgd { fill: #c040d0; }
.gl { stroke: #78c060; stroke-width: 1; }
.yl { stroke: #d8dca4; stroke-width: 1; fill: none; }
.t-b { font: 21px "Noto Sans CJK SC", sans-serif; fill: #e0e0e0; }
.t-l { font: 24px "Liberation Sans", sans-serif; fill: #dedede; }
.t-s { font: 20px "Noto Sans CJK SC", sans-serif; fill: #e0e0e0; }
.t-y { font: 21px "Noto Sans CJK SC", sans-serif; fill: #d6d878; }

/* annotation arrows drawn over the whole screenshot */
.arrows { position: absolute; left: 0; top: 0; pointer-events: none; }
.ar { fill: none; stroke: #e8121a; stroke-width: 3.500; }
.ar-small { stroke-width: 2.500; }
.ar-fade { stroke: #ec4a50; stroke-width: 5; }
```
